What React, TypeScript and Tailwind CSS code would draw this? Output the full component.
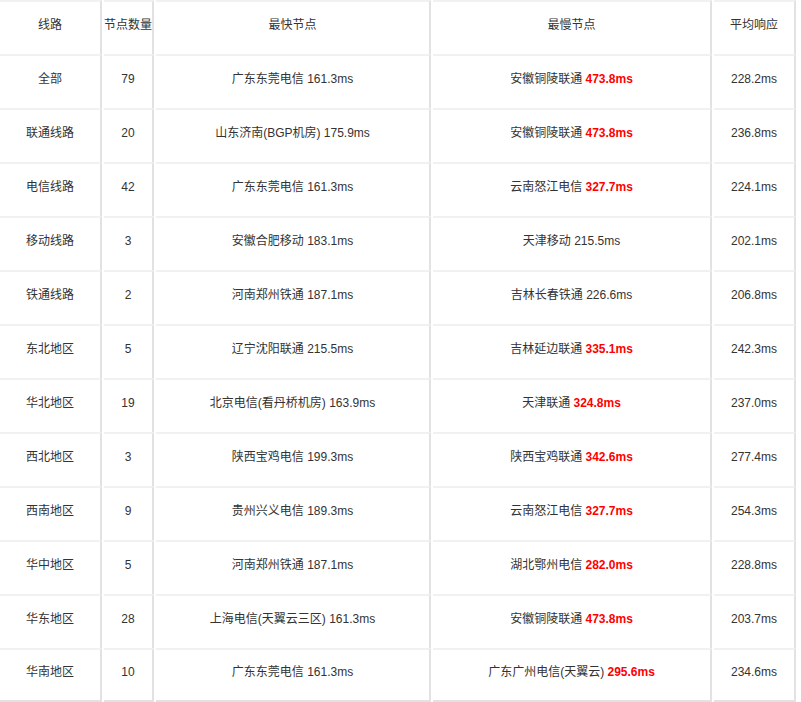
import React from "react";

type Row = {
  name: string;
  count: string;
  fast: string;
  fastMs: string;
  slow: string;
  slowMs: string;
  slowRed: boolean;
  avg: string;
};

const rows: Row[] = [
  { name: "全部", count: "79", fast: "广东东莞电信", fastMs: "161.3ms", slow: "安徽铜陵联通", slowMs: "473.8ms", slowRed: true, avg: "228.2ms" },
  { name: "联通线路", count: "20", fast: "山东济南(BGP机房)", fastMs: "175.9ms", slow: "安徽铜陵联通", slowMs: "473.8ms", slowRed: true, avg: "236.8ms" },
  { name: "电信线路", count: "42", fast: "广东东莞电信", fastMs: "161.3ms", slow: "云南怒江电信", slowMs: "327.7ms", slowRed: true, avg: "224.1ms" },
  { name: "移动线路", count: "3", fast: "安徽合肥移动", fastMs: "183.1ms", slow: "天津移动", slowMs: "215.5ms", slowRed: false, avg: "202.1ms" },
  { name: "铁通线路", count: "2", fast: "河南郑州铁通", fastMs: "187.1ms", slow: "吉林长春铁通", slowMs: "226.6ms", slowRed: false, avg: "206.8ms" },
  { name: "东北地区", count: "5", fast: "辽宁沈阳联通", fastMs: "215.5ms", slow: "吉林延边联通", slowMs: "335.1ms", slowRed: true, avg: "242.3ms" },
  { name: "华北地区", count: "19", fast: "北京电信(看丹桥机房)", fastMs: "163.9ms", slow: "天津联通", slowMs: "324.8ms", slowRed: true, avg: "237.0ms" },
  { name: "西北地区", count: "3", fast: "陕西宝鸡电信", fastMs: "199.3ms", slow: "陕西宝鸡联通", slowMs: "342.6ms", slowRed: true, avg: "277.4ms" },
  { name: "西南地区", count: "9", fast: "贵州兴义电信", fastMs: "189.3ms", slow: "云南怒江电信", slowMs: "327.7ms", slowRed: true, avg: "254.3ms" },
  { name: "华中地区", count: "5", fast: "河南郑州铁通", fastMs: "187.1ms", slow: "湖北鄂州电信", slowMs: "282.0ms", slowRed: true, avg: "228.8ms" },
  { name: "华东地区", count: "28", fast: "上海电信(天翼云三区)", fastMs: "161.3ms", slow: "安徽铜陵联通", slowMs: "473.8ms", slowRed: true, avg: "203.7ms" },
  { name: "华南地区", count: "10", fast: "广东东莞电信", fastMs: "161.3ms", slow: "广东广州电信(天翼云)", slowMs: "295.6ms", slowRed: true, avg: "234.6ms" },
];

function Cell({ children, last }: { children: React.ReactNode; last?: boolean }) {
  return (
    <div
      className={
        "flex h-[54px] items-center justify-center border-t-2 border-r-2 border-t-[#f1f1f1] border-r-[#e2e2e2] bg-white pb-[6px] " +
        (last ? "border-b-2 border-b-[#e2e2e2]" : "")
      }
    >
      {children}
    </div>
  );
}

export default function App() {
  return (
    <div
      className="h-[702px] w-[801px] overflow-hidden bg-white text-[12px] leading-[16px] text-[#333333]"
      style={{ fontFamily: '"Liberation Sans", Arial, "Noto Sans CJK SC", sans-serif' }}
    >
      <div className="grid w-[796px] grid-cols-[102px_50px_275px_279px_82px] gap-x-[2px]">
        <Cell>线路</Cell>
        <Cell>节点数量</Cell>
        <Cell>最快节点</Cell>
        <Cell>最慢节点</Cell>
        <Cell>平均响应</Cell>
        {rows.map((r, i) => {
          const last = i === rows.length - 1;
          return (
            <React.Fragment key={r.name}>
              <Cell last={last}>{r.name}</Cell>
              <Cell last={last}>{r.count}</Cell>
              <Cell last={last}>
                <span>
                  {r.fast} {r.fastMs}
                </span>
              </Cell>
              <Cell last={last}>
                <span>
                  {r.slow}{" "}
                  {r.slowRed ? (
                    <span className="font-bold text-[#ff0000]">{r.slowMs}</span>
                  ) : (
                    <span>{r.slowMs}</span>
                  )}
                </span>
              </Cell>
              <Cell last={last}>{r.avg}</Cell>
            </React.Fragment>
          );
        })}
      </div>
    </div>
  );
}
